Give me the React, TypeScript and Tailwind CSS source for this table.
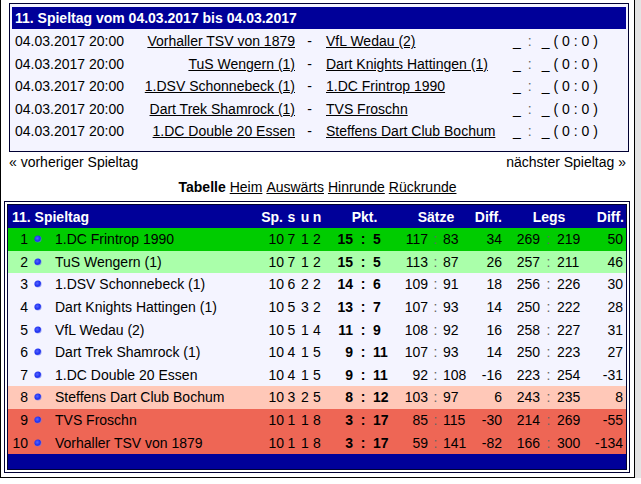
import React from 'react';

interface Match {
  date: string;
  home: string;
  away: string;
}

interface Team {
  rank: number;
  name: string;
  sp: number;
  s: number;
  u: number;
  n: number;
  pktPlus: number;
  pktMinus: number;
  saetzePlus: number;
  saetzeMinus: number;
  saetzeDiff: number;
  legsPlus: number;
  legsMinus: number;
  legsDiff: number;
  bg: string;
}

const matches: Match[] = [
  { date: '04.03.2017 20:00', home: 'Vorhaller TSV von 1879', away: 'VfL Wedau (2)' },
  { date: '04.03.2017 20:00', home: 'TuS Wengern (1)', away: 'Dart Knights Hattingen (1)' },
  { date: '04.03.2017 20:00', home: '1.DSV Schonnebeck (1)', away: '1.DC Frintrop 1990' },
  { date: '04.03.2017 20:00', home: 'Dart Trek Shamrock (1)', away: 'TVS Froschn' },
  { date: '04.03.2017 20:00', home: '1.DC Double 20 Essen', away: 'Steffens Dart Club Bochum' },
];

const teams: Team[] = [
  { rank: 1, name: '1.DC Frintrop 1990', sp: 10, s: 7, u: 1, n: 2, pktPlus: 15, pktMinus: 5, saetzePlus: 117, saetzeMinus: 83, saetzeDiff: 34, legsPlus: 269, legsMinus: 219, legsDiff: 50, bg: 'bg-[#00cc00]' },
  { rank: 2, name: 'TuS Wengern (1)', sp: 10, s: 7, u: 1, n: 2, pktPlus: 15, pktMinus: 5, saetzePlus: 113, saetzeMinus: 87, saetzeDiff: 26, legsPlus: 257, legsMinus: 211, legsDiff: 46, bg: 'bg-[#aaffaa]' },
  { rank: 3, name: '1.DSV Schonnebeck (1)', sp: 10, s: 6, u: 2, n: 2, pktPlus: 14, pktMinus: 6, saetzePlus: 109, saetzeMinus: 91, saetzeDiff: 18, legsPlus: 256, legsMinus: 226, legsDiff: 30, bg: '' },
  { rank: 4, name: 'Dart Knights Hattingen (1)', sp: 10, s: 5, u: 3, n: 2, pktPlus: 13, pktMinus: 7, saetzePlus: 107, saetzeMinus: 93, saetzeDiff: 14, legsPlus: 250, legsMinus: 222, legsDiff: 28, bg: '' },
  { rank: 5, name: 'VfL Wedau (2)', sp: 10, s: 5, u: 1, n: 4, pktPlus: 11, pktMinus: 9, saetzePlus: 108, saetzeMinus: 92, saetzeDiff: 16, legsPlus: 258, legsMinus: 227, legsDiff: 31, bg: '' },
  { rank: 6, name: 'Dart Trek Shamrock (1)', sp: 10, s: 4, u: 1, n: 5, pktPlus: 9, pktMinus: 11, saetzePlus: 107, saetzeMinus: 93, saetzeDiff: 14, legsPlus: 250, legsMinus: 223, legsDiff: 27, bg: '' },
  { rank: 7, name: '1.DC Double 20 Essen', sp: 10, s: 4, u: 1, n: 5, pktPlus: 9, pktMinus: 11, saetzePlus: 92, saetzeMinus: 108, saetzeDiff: -16, legsPlus: 223, legsMinus: 254, legsDiff: -31, bg: '' },
  { rank: 8, name: 'Steffens Dart Club Bochum', sp: 10, s: 3, u: 2, n: 5, pktPlus: 8, pktMinus: 12, saetzePlus: 103, saetzeMinus: 97, saetzeDiff: 6, legsPlus: 243, legsMinus: 235, legsDiff: 8, bg: 'bg-[#ffc8b8]' },
  { rank: 9, name: 'TVS Froschn', sp: 10, s: 1, u: 1, n: 8, pktPlus: 3, pktMinus: 17, saetzePlus: 85, saetzeMinus: 115, saetzeDiff: -30, legsPlus: 214, legsMinus: 269, legsDiff: -55, bg: 'bg-[#ee6655]' },
  { rank: 10, name: 'Vorhaller TSV von 1879', sp: 10, s: 1, u: 1, n: 8, pktPlus: 3, pktMinus: 17, saetzePlus: 59, saetzeMinus: 141, saetzeDiff: -82, legsPlus: 166, legsMinus: 300, legsDiff: -134, bg: 'bg-[#ee6655]' },
];

const cols =
  'grid grid-cols-[20px_19px_208px_29px_15px_12px_12px_30px_20px_22px_33px_15px_27px_32px_38px_17px_28px_40px] items-center';

function Dot() {
  return (
    <svg width="8" height="8" viewBox="0 0 8 8">
      <defs>
        <radialGradient id="dotg" cx="40%" cy="40%" r="60%">
          <stop offset="0%" stopColor="#5566ff" />
          <stop offset="70%" stopColor="#1a2cf0" />
          <stop offset="100%" stopColor="#6a78f0" stopOpacity="0.6" />
        </radialGradient>
      </defs>
      <circle cx="4" cy="4" r="3.6" fill="url(#dotg)" />
    </svg>
  );
}

export default function App() {
  return (
    <div className="w-[641px] h-[484px] bg-white flex font-['Liberation_Sans',Arial,sans-serif] text-[14px] text-black leading-none">
      <div className="w-[635px] h-[478px] border-l border-r border-b border-black flex flex-col">
        {/* Spieltag box */}
        <div className="ml-[8px] mt-[3px] w-[620px] border border-[#000033] bg-[#f4f4ff] px-[2px] pt-[3px] pb-[8px]">
          <div className="h-[22px] bg-[#000099] text-white font-bold pl-[3px] flex items-center">
            11. Spieltag vom 04.03.2017 bis 04.03.2017
          </div>
          <div className="mt-[1px]">
            {matches.map((m, i) => (
              <div key={i} className="h-[22.5px] grid grid-cols-[128px_157px_25px_188px_1fr] items-center">
                <span className="pl-[3px]">{m.date}</span>
                <span className="text-right pr-[2px] underline">{m.home}</span>
                <span className="text-center">-</span>
                <span className="pl-[4px] underline">{m.away}</span>
                <span className="pl-[3px] flex">
                  <span>_</span>
                  <span className="ml-[7px] text-[#666666]">:</span>
                  <span className="ml-[10px]">_</span>
                  <span className="ml-[4px] whitespace-pre">( 0 : 0 )</span>
                </span>
              </div>
            ))}
          </div>
        </div>

        {/* Navigation */}
        <div className="h-[21px] flex items-center justify-between pl-[8px] pr-[8px]">
          <span>« vorheriger Spieltag</span>
          <span>nächster Spieltag »</span>
        </div>
        <div className="h-[28.5px] flex items-center justify-center gap-[4px]">
          <span className="font-bold">Tabelle</span>
          <span className="underline">Heim</span>
          <span className="underline">Auswärts</span>
          <span className="underline">Hinrunde</span>
          <span className="underline">Rückrunde</span>
        </div>

        {/* Tabelle */}
        <div className="ml-[3px] w-[626px] border border-[#000033] p-[2px]">
          <div className="border border-[#000033] bg-[#f4f4ff]">
            <div className={`${cols} h-[23px] bg-[#000099] text-white font-bold`}>
              <span className="col-span-3 pl-[4px]">11. Spieltag</span>
              <span className="text-right pr-[1px]">Sp.</span>
              <span className="text-center">s</span>
              <span className="text-center">u</span>
              <span className="text-center">n</span>
              <span className="col-span-3 text-center pl-[11px]">Pkt.</span>
              <span className="col-span-3 text-center pl-[7px]">Sätze</span>
              <span className="text-right">Diff.</span>
              <span className="col-span-3 text-center pl-[11px]">Legs</span>
              <span className="text-right pr-[1px]">Diff.</span>
            </div>
            {teams.map((t) => (
              <div key={t.rank} className={`${cols} h-[22.6px] ${t.bg}`}>
                <span className="text-right">{t.rank}</span>
                <span className="flex justify-center items-center">
                  <Dot />
                </span>
                <span className="pl-[8px] whitespace-nowrap">{t.name}</span>
                <span className="text-right">{t.sp}</span>
                <span className="text-center">{t.s}</span>
                <span className="text-center">{t.u}</span>
                <span className="text-center">{t.n}</span>
                <span className="text-right font-bold">{t.pktPlus}</span>
                <span className="text-center font-bold">:</span>
                <span className="font-bold">{t.pktMinus}</span>
                <span className="text-right">{t.saetzePlus}</span>
                <span className="text-center text-[#666666]">:</span>
                <span>{t.saetzeMinus}</span>
                <span className="text-right">{t.saetzeDiff}</span>
                <span className="text-right">{t.legsPlus}</span>
                <span className="text-center text-[#666666]">:</span>
                <span>{t.legsMinus}</span>
                <span className="text-right pr-[2px]">{t.legsDiff}</span>
              </div>
            ))}
            <div className="h-[15px] bg-[#000099]" />
          </div>
        </div>
      </div>
      <div className="w-[6px] h-[478px] bg-[#e4e4e4]" />
    </div>
  );
}
